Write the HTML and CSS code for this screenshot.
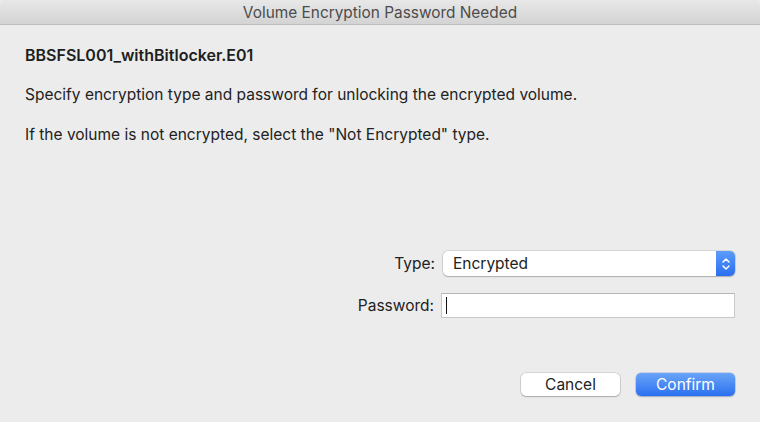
FILE: index.html
```html
<!DOCTYPE html>
<html>
<head>
<meta charset="utf-8">
<link rel="stylesheet" href="styles.css">
</head>
<body>
<div class="window">
  <div class="titlebar">Volume Encryption Password Needed</div>
  <div class="content">
    <div class="filename">BBSFSL001_withBitlocker.E01</div>
    <p class="msg msg1">Specify encryption type and password for unlocking the encrypted volume.</p>
    <p class="msg msg2">If the volume is not encrypted, select the "Not Encrypted" type.</p>
    <div class="form">
      <div class="row">
        <span class="label">Type:</span>
        <div class="popup">
          <span class="popup-text">Encrypted</span>
          <span class="popup-arrows">
            <svg width="10" height="14" viewBox="0 0 10 14"><path d="M2 5 L5 2 L8 5 M2 9 L5 12 L8 9" fill="none" stroke="#fff" stroke-width="1.5" stroke-linecap="round" stroke-linejoin="round"/></svg>
          </span>
        </div>
      </div>
      <div class="row row2">
        <span class="label">Password:</span>
        <div class="field"><span class="caret"></span></div>
      </div>
    </div>
    <div class="buttons">
      <button class="btn cancel">Cancel</button>
      <button class="btn confirm">Confirm</button>
    </div>
  </div>
</div>
</body>
</html>
```
FILE: styles.css
```css
html, body {
  margin: 0;
  padding: 0;
  background: #ececec;
}
body {
  font-family: Inter, "Liberation Sans", sans-serif;
  color: #222;
  width: 760px;
  height: 422px;
  overflow: hidden;
}
.window {
  width: 760px;
  height: 422px;
  display: flex;
  flex-direction: column;
  background: #ececec;
}
.titlebar {
  height: 25px;
  box-sizing: border-box;
  background: linear-gradient(#e8e8e8, #d3d3d3);
  border-bottom: 1px solid #bdbdbd;
  border-radius: 5px 5px 0 0;
  text-align: center;
  font-size: 15.4px;
  line-height: 26px;
  color: #4c4c4c;
}
.content {
  flex: 1;
  padding: 0 25px 0 25px;
  display: flex;
  flex-direction: column;
}
.filename {
  margin-top: 21px;
  font-weight: 600;
  font-size: 16px;
  line-height: 18px;
  color: #1e1e1e;
}
.msg {
  margin: 0;
  font-size: 15.5px;
  line-height: 18px;
}
.msg1 { margin-top: 22px; }
.msg2 { margin-top: 22px; }
.form {
  margin-top: 107px;
  display: flex;
  flex-direction: column;
  align-items: flex-end;
  gap: 17px;
}
.row {
  display: flex;
  align-items: center;
}
.label {
  font-size: 15.5px;
  margin-right: 8px;
}
.popup {
  width: 292px;
  height: 25px;
  box-sizing: border-box;
  background: #fff;
  border-radius: 5px;
  box-shadow: 0 0 0 0.5px rgba(0,0,0,0.18), 0 1px 1.5px rgba(0,0,0,0.2);
  display: flex;
  align-items: center;
  justify-content: space-between;
  overflow: hidden;
}
.popup-text {
  font-size: 15.5px;
  padding-left: 10px;
}
.popup-arrows {
  width: 19px;
  height: 25px;
  background: linear-gradient(#5b9cf8, #2a6ef0);
  display: flex;
  align-items: center;
  justify-content: center;
}
.row2 .label { margin-right: 7px; }
.field {
  width: 294px;
  height: 25px;
  box-sizing: border-box;
  background: #fff;
  border: 1px solid #c8c8c8;
  border-top-color: #b6b6b6;
  display: flex;
  align-items: center;
  padding-left: 4px;
}
.caret {
  width: 1px;
  height: 17px;
  background: #111;
}
.buttons {
  margin-top: 55px;
  display: flex;
  justify-content: flex-end;
  gap: 16px;
}
.btn {
  width: 99px;
  height: 23px;
  border: none;
  border-radius: 5px;
  font-family: inherit;
  font-size: 15.5px;
  padding: 0;
}
.cancel {
  background: #fff;
  color: #222;
  box-shadow: 0 0 0 0.5px rgba(0,0,0,0.2), 0 1px 1.5px rgba(0,0,0,0.2);
}
.confirm {
  background: linear-gradient(#6aa5f8, #2b6ff0);
  color: #fff;
  box-shadow: 0 0 0 0.5px rgba(0,60,200,0.3), 0 1px 1.5px rgba(0,0,0,0.2);
}
```
